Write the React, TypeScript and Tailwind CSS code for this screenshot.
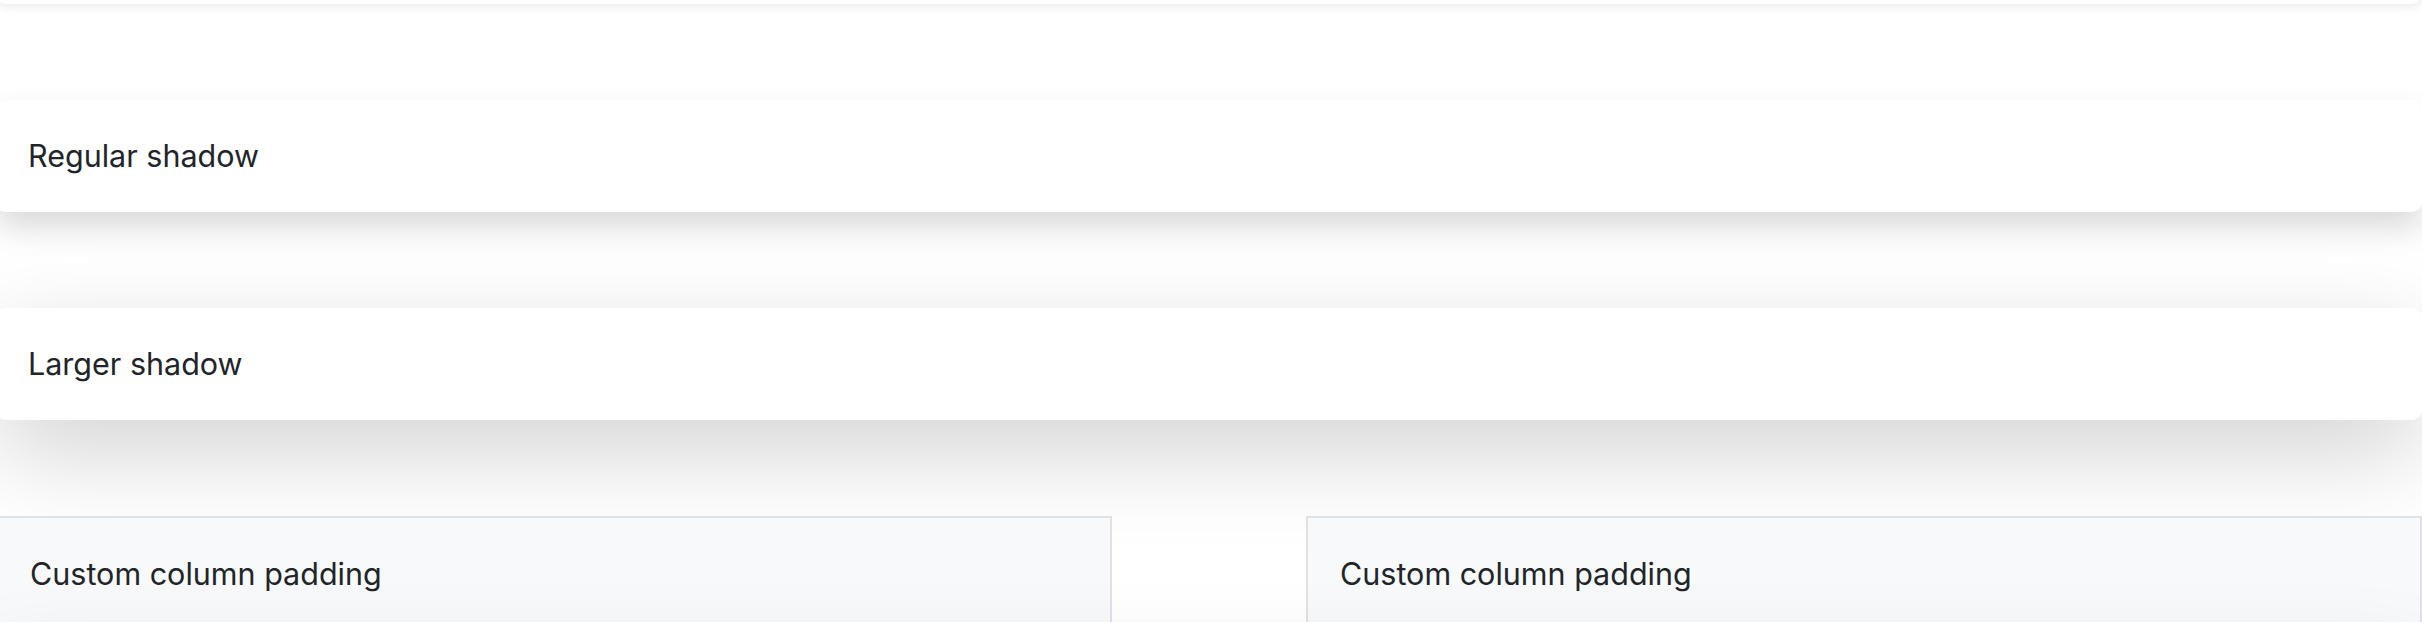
export default function App() {
  return (
    <div className="min-h-screen bg-white overflow-hidden">
      <div
        className="ml-[-4px] w-[2426px] text-[30.5px] leading-[48px] text-[#212529]"
        style={{ fontFamily: 'Inter, "Noto Sans", sans-serif' }}
      >
        {/* small shadow box, scrolled above the frame */}
        <div className="mt-[-108px] mb-[96px] h-[112px] rounded-[10px] bg-white shadow-[0_4px_8px_rgba(0,0,0,0.075)]" />

        <div className="mb-[96px] p-[32px] rounded-[10px] bg-white shadow-[0_16px_32px_rgba(0,0,0,0.15)]">
          Regular shadow
        </div>

        <div className="mb-[96px] p-[32px] rounded-[10px] bg-white shadow-[0_32px_96px_rgba(0,0,0,0.175)]">
          Larger shadow
        </div>

        <div className="grid grid-cols-2 gap-x-[194px]">
          <div className="p-[32px] border-2 border-[#dee2e6] bg-[#f8f9fa]">Custom column padding</div>
          <div className="p-[32px] border-2 border-[#dee2e6] bg-[#f8f9fa]">Custom column padding</div>
        </div>

        {/* next section below the fold; its shadow reaches up over the columns */}
        <div className="relative mt-[14px] h-[112px] rounded-[10px] bg-white shadow-[0_32px_96px_rgba(0,0,0,0.175)]" />
      </div>
    </div>
  );
}
